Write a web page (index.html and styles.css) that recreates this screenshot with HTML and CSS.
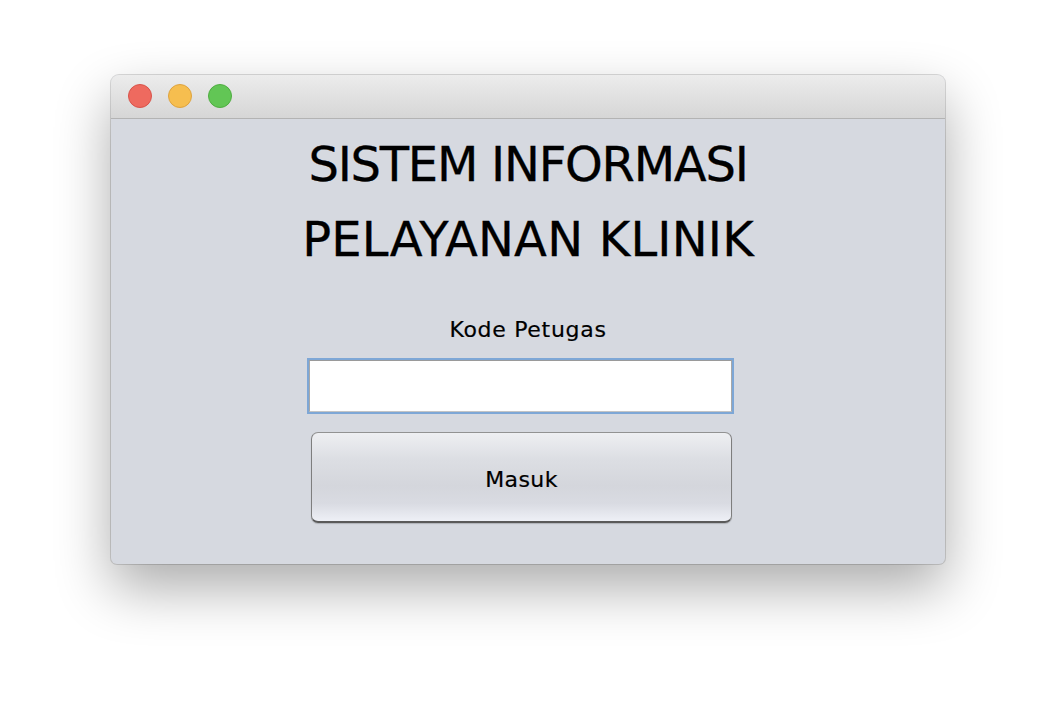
FILE: index.html
```html
<!DOCTYPE html>
<html>
<head>
<meta charset="utf-8">
<link rel="stylesheet" href="styles.css">
</head>
<body>
<div class="window">
  <div class="titlebar">
    <span class="light red"></span>
    <span class="light yellow"></span>
    <span class="light green"></span>
  </div>
  <div class="content">
    <h1 class="title"><span class="line1">SISTEM INFORMASI</span><br><span class="line2">PELAYANAN KLINIK</span></h1>
    <div class="label">Kode Petugas</div>
    <div class="form">
      <div class="field"><input class="input" type="text"></div>
      <button class="button">Masuk</button>
    </div>
  </div>
</div>
</body>
</html>
```

FILE: styles.css
```css
html, body {
  margin: 0;
  padding: 0;
  background: #ffffff;
}
body {
  width: 1056px;
  height: 712px;
  padding: 75px 0 0 111px;
  box-sizing: border-box;
  font-family: "DejaVu Sans", "Liberation Sans", sans-serif;
}
.window {
  width: 834px;
  height: 489px;
  background: #d6d9e0;
  border-radius: 8px 8px 6px 6px;
  box-shadow: 0 24px 55px rgba(0, 0, 0, 0.33), 0 0 0 1px rgba(0, 0, 0, 0.14);
  display: flex;
  flex-direction: column;
  overflow: hidden;
}
.titlebar {
  height: 44px;
  flex: none;
  border-bottom: 1px solid #b3b3b3;
  background: linear-gradient(#ececec, #d6d6d6);
  display: flex;
  align-items: center;
  gap: 16px;
  padding-left: 17px;
  padding-bottom: 1px;
  box-sizing: border-box;
}
.light {
  width: 24px;
  height: 24px;
  border-radius: 50%;
  box-sizing: border-box;
}
.red { background: #ee6a5f; border: 1px solid #d8534a; }
.yellow { background: #f6be4f; border: 1px solid #dea33f; }
.green { background: #62c655; border: 1px solid #4fad41; }
.content {
  flex: 1;
  display: flex;
  flex-direction: column;
  align-items: center;
  padding-top: 8px;
}
.title {
  margin: 0;
  font-weight: normal;
  font-size: 48px;
  line-height: 75px;
  text-align: center;
  color: #000;
  -webkit-text-stroke: 0.3px #000;
}
.line1 {
  letter-spacing: -1.25px;
}
.line2 {
  letter-spacing: 0.2px;
}
.label {
  margin-top: 40px;
  font-size: 22px;
  line-height: 26px;
  letter-spacing: 0.7px;
  color: #000;
  -webkit-text-stroke: 0.2px #000;
}
.form {
  margin-top: 15px;
  margin-right: 15px;
  display: flex;
  flex-direction: column;
  align-items: center;
  gap: 18px;
}
.field {
  width: 427px;
  height: 56px;
  flex: none;
  box-sizing: border-box;
  border: 2px solid #7ea7d6;
  display: flex;
}
.input {
  flex: 1;
  margin: 0;
  border: 1px solid #a8a8a8;
  border-top-color: #9a9a9a;
  border-bottom-color: #c4c4c4;
  background: #ffffff;
  outline: none;
  padding: 0 6px;
  font: 22px "DejaVu Sans", sans-serif;
}
.button {
  width: 421px;
  height: 91px;
  flex: none;
  margin: 0 0 0 2px;
  padding: 4px 0 0;
  border: 1px solid #7e7e7e;
  border-top-color: #929292;
  border-bottom: 2px solid #5a5a5a;
  border-radius: 7px;
  background: linear-gradient(#eeeff2 0%, #dcdee3 30%, #d4d6dc 60%, #d9dbe2 80%, #eef0f6 100%);
  box-shadow: 0 1px 1px rgba(0, 0, 0, 0.18);
  font-family: "DejaVu Sans", sans-serif;
  font-size: 22px;
  letter-spacing: 0.4px;
  color: #000;
  -webkit-text-stroke: 0.2px #000;
}
```
